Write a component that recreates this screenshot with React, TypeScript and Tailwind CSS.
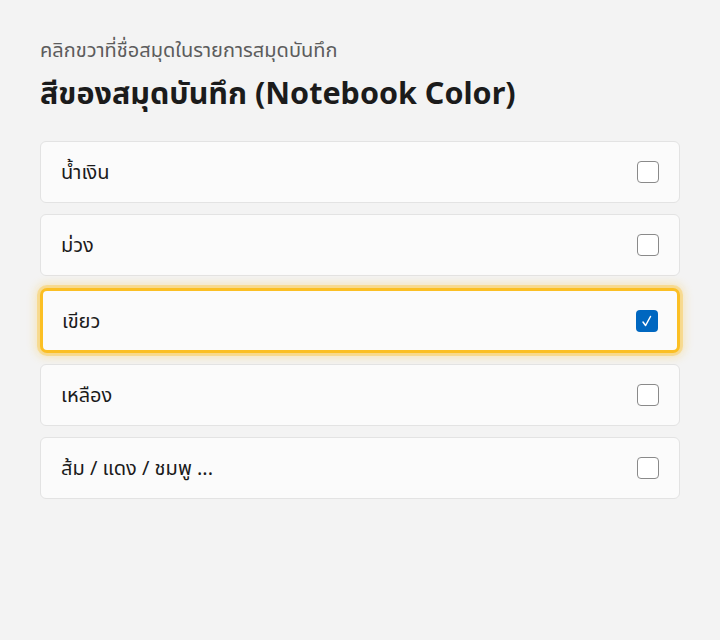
const colors = [
  { id: 'blue', label: 'น้ำเงิน', checked: false },
  { id: 'purple', label: 'ม่วง', checked: false },
  { id: 'green', label: 'เขียว', checked: true },
  { id: 'yellow', label: 'เหลือง', checked: false },
  { id: 'other', label: 'ส้ม / แดง / ชมพู ...', checked: false },
];

function Checkbox({ checked }: { checked: boolean }) {
  if (checked) {
    return (
      <span className="flex h-[22px] w-[22px] items-center justify-center rounded-[4px] bg-[#0067c0]">
        <svg viewBox="0 0 16 16" className="h-[16px] w-[16px]" fill="none" stroke="white" strokeWidth="1.5" strokeLinecap="round" strokeLinejoin="round">
          <path d="M4 9 L6.6 12.5 L11.5 3.5" />
        </svg>
      </span>
    );
  }
  return <span className="h-[22px] w-[22px] rounded-[4px] border border-[#8a8a8a] bg-white" />;
}

export default function App() {
  return (
    <div
      className="min-h-[640px] w-[720px] bg-[#f3f3f3] px-10 pt-[35px] text-[#1b1b1b]"
      style={{ fontFamily: '"Noto Sans", "Noto Sans Thai", "DejaVu Sans", sans-serif' }}
    >
      <p className="text-[20px] leading-[30px] text-[#5c5c5c]">คลิกขวาที่ชื่อสมุดในรายการสมุดบันทึก</p>
      <h1 className="mt-[6px] text-[30.5px] font-bold leading-[42px]">สีของสมุดบันทึก (Notebook Color)</h1>

      <ul className="mt-[28px] flex flex-col gap-[11px]">
        {colors.map((color) =>
          color.checked ? (
            <li
              key={color.id}
              className="mt-px flex h-[65px] items-center justify-between rounded-[7px] border-[3px] border-[#fbbf24] bg-[#fbfbfb] pl-[19px] pr-[19px] shadow-[0_0_0_3px_rgba(251,191,36,0.35),0_0_10px_4px_rgba(251,191,36,0.3)]"
            >
              <span className="text-[20px]">{color.label}</span>
              <Checkbox checked />
            </li>
          ) : (
            <li
              key={color.id}
              className="flex h-[62px] items-center justify-between rounded-[6px] border border-[#e3e3e3] bg-[#fbfbfb] pl-[20px] pr-[20px]"
            >
              <span className="text-[20px]">{color.label}</span>
              <Checkbox checked={false} />
            </li>
          )
        )}
      </ul>
    </div>
  );
}
